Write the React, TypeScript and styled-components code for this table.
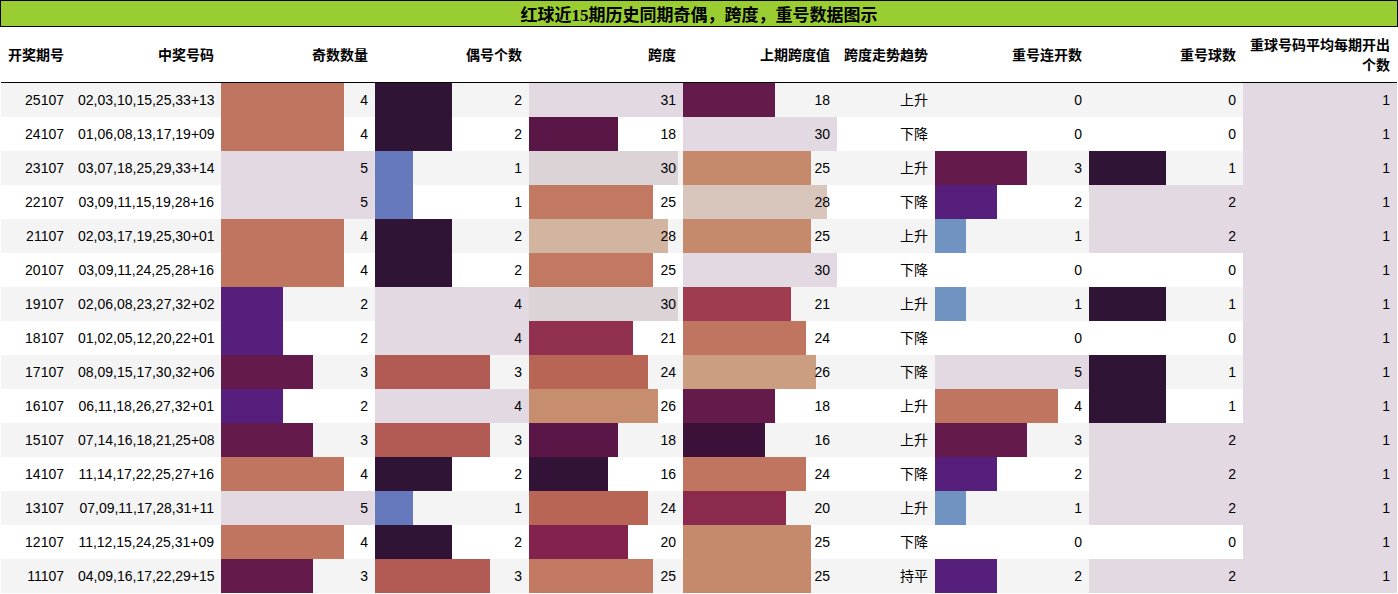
import React from 'react';
import styled, { createGlobalStyle } from 'styled-components';

const GlobalStyle = createGlobalStyle`
  html, body {
    margin: 0;
    padding: 0;
    background: #ffffff;
  }
  body {
    font-family: "Liberation Sans", "Noto Sans CJK SC", sans-serif;
    color: #000;
  }
`;

const Sheet = styled.div`
  width: 1398px;
`;

const TitleBar = styled.div`
  box-sizing: border-box;
  height: 27px;
  border: 1px solid #000;
  background: #9acd32;
  display: flex;
  align-items: center;
  justify-content: center;
  font-family: "Liberation Serif", "Noto Sans CJK SC", serif;
  font-weight: bold;
  font-size: 17px;
  color: #000;
`;

const DataTable = styled.table`
  margin-left: 1px;
  width: 1396px;
  table-layout: fixed;
  border-collapse: collapse;
  border-spacing: 0;
  font-size: 14px;
`;

const HeadCell = styled.th<{ $w: number }>`
  width: ${(p) => p.$w}px;
  padding: 8px 7px 7px;
  line-height: 20px;
  height: 40px;
  text-align: right;
  vertical-align: middle;
  font-weight: bold;
  font-family: "Liberation Sans", "Noto Sans CJK SC", sans-serif;
  border-bottom: 1px solid #000;
  word-break: break-all;
`;

const Row = styled.tr`
  &:nth-child(odd) {
    background: #f4f4f4;
  }
  &:nth-child(even) {
    background: #ffffff;
  }
`;

const Cell = styled.td`
  height: 34px;
  padding: 0 7px;
  text-align: right;
  vertical-align: middle;
  white-space: nowrap;
  line-height: 16px;
`;

const STOPS: [number, string][] = [
  [0, '#e2d9e2'],
  [0.1, '#b4bfd5'],
  [0.2, '#7193c1'],
  [0.25, '#6679bd'],
  [0.3, '#5f63b8'],
  [0.4, '#561f7c'],
  [0.5, '#2f1436'],
  [0.516, '#331238'],
  [0.533, '#3c1139'],
  [0.58, '#5b1648'],
  [0.6, '#641a4a'],
  [0.645, '#82224d'],
  [0.667, '#8c2a4e'],
  [0.7, '#9f3c50'],
  [0.75, '#b15953'],
  [0.775, '#b96556'],
  [0.8, '#c07560'],
  [0.835, '#c58b6d'],
  [0.867, '#cb9e82'],
  [0.903, '#d1b5a0'],
  [0.933, '#d8c6bd'],
  [0.968, '#dcd3d6'],
  [1, '#e2d9e2'],
];

const hexToRgb = (h: string) => [
  parseInt(h.slice(1, 3), 16),
  parseInt(h.slice(3, 5), 16),
  parseInt(h.slice(5, 7), 16),
];

const twilight = (t: number) => {
  const x = Math.max(0, Math.min(1, t));
  for (let i = 0; i < STOPS.length - 1; i++) {
    const [t0, c0] = STOPS[i];
    const [t1, c1] = STOPS[i + 1];
    if (x >= t0 && x <= t1) {
      const f = t1 === t0 ? 0 : (x - t0) / (t1 - t0);
      const a = hexToRgb(c0);
      const b = hexToRgb(c1);
      const m = a.map((v, k) => Math.round(v + (b[k] - v) * f));
      return `rgb(${m[0]}, ${m[1]}, ${m[2]})`;
    }
  }
  return STOPS[STOPS.length - 1][1];
};

type RowData = [string, string, number, number, number, number, string, number, number, number];

const ROWS: RowData[] = [
  ['25107', '02,03,10,15,25,33+13', 4, 2, 31, 18, '上升', 0, 0, 1],
  ['24107', '01,06,08,13,17,19+09', 4, 2, 18, 30, '下降', 0, 0, 1],
  ['23107', '03,07,18,25,29,33+14', 5, 1, 30, 25, '上升', 3, 1, 1],
  ['22107', '03,09,11,15,19,28+16', 5, 1, 25, 28, '下降', 2, 2, 1],
  ['21107', '02,03,17,19,25,30+01', 4, 2, 28, 25, '上升', 1, 2, 1],
  ['20107', '03,09,11,24,25,28+16', 4, 2, 25, 30, '下降', 0, 0, 1],
  ['19107', '02,06,08,23,27,32+02', 2, 4, 30, 21, '上升', 1, 1, 1],
  ['18107', '01,02,05,12,20,22+01', 2, 4, 21, 24, '下降', 0, 0, 1],
  ['17107', '08,09,15,17,30,32+06', 3, 3, 24, 26, '下降', 5, 1, 1],
  ['16107', '06,11,18,26,27,32+01', 2, 4, 26, 18, '上升', 4, 1, 1],
  ['15107', '07,14,16,18,21,25+08', 3, 3, 18, 16, '上升', 3, 2, 1],
  ['14107', '11,14,17,22,25,27+16', 4, 2, 16, 24, '下降', 2, 2, 1],
  ['13107', '07,09,11,17,28,31+11', 5, 1, 24, 20, '上升', 1, 2, 1],
  ['12107', '11,12,15,24,25,31+09', 4, 2, 20, 25, '下降', 0, 0, 1],
  ['11107', '04,09,16,17,22,29+15', 3, 3, 25, 25, '持平', 2, 2, 1],
];

const HEADERS: { label: string; w: number }[] = [
  { label: '开奖期号', w: 56 },
  { label: '中奖号码', w: 136 },
  { label: '奇数数量', w: 140 },
  { label: '偶号个数', w: 140 },
  { label: '跨度', w: 140 },
  { label: '上期跨度值', w: 140 },
  { label: '跨度走势趋势', w: 84 },
  { label: '重号连开数', w: 140 },
  { label: '重号球数', w: 140 },
  { label: '重球号码平均每期开出个数', w: 140 },
];

const BAR_COLS = [2, 3, 4, 5, 7, 8, 9];
const maxOf = (col: number) => Math.max(...ROWS.map((r) => r[col] as number));
const MAXES: Record<number, number> = Object.fromEntries(BAR_COLS.map((c) => [c, maxOf(c)]));

const barStyle = (value: number, max: number): React.CSSProperties => {
  const t = max > 0 ? value / max : 0;
  if (t <= 0) return {};
  const pct = (t * 100).toFixed(2);
  const color = twilight(t);
  return {
    background: `linear-gradient(90deg, ${color} ${pct}%, transparent ${pct}%)`,
  };
};

export default function App() {
  return (
    <Sheet>
      <GlobalStyle />
      <TitleBar>红球近15期历史同期奇偶，跨度，重号数据图示</TitleBar>
      <DataTable>
        <thead>
          <tr>
            {HEADERS.map((h) => (
              <HeadCell key={h.label} $w={h.w}>
                {h.label}
              </HeadCell>
            ))}
          </tr>
        </thead>
        <tbody>
          {ROWS.map((r) => (
            <Row key={r[0]}>
              {r.map((v, i) =>
                BAR_COLS.includes(i) ? (
                  <Cell key={i} style={barStyle(v as number, MAXES[i])}>
                    {v}
                  </Cell>
                ) : (
                  <Cell key={i}>{v}</Cell>
                )
              )}
            </Row>
          ))}
        </tbody>
      </DataTable>
    </Sheet>
  );
}
